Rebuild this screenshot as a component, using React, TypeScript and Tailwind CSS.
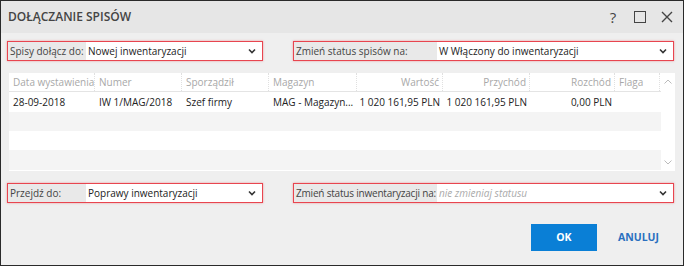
import React from "react";

const Chevron = () => (
  <svg width="8" height="6" viewBox="0 0 8 6" className="shrink-0">
    <polyline points="1,1.5 4,4.5 7,1.5" fill="none" stroke="#333" strokeWidth="1.6" />
  </svg>
);

function SelectBox({
  label,
  value,
  width,
  labelWidth,
  placeholder,
  tight,
}: {
  label: string;
  value: string;
  width: string;
  labelWidth: string;
  placeholder?: boolean;
  tight?: boolean;
}) {
  return (
    <div
      className={`${width} h-[20px] flex border border-[#e8454f] shadow-[0_0_2px_rgba(232,69,79,0.5)]`}
    >
      <div
        className={`${labelWidth} shrink-0 bg-[#e9e9e9] pl-[2px] flex items-center text-[#444] whitespace-nowrap overflow-hidden ${tight ? "tracking-[-0.2px]" : ""}`}
      >
        {label}
      </div>
      <div className="flex-1 bg-white flex items-center pl-[2px] pr-[6px]">
        <span className={`flex-1 whitespace-nowrap ${placeholder ? "italic text-[#aaa]" : "text-[#222]"}`}>{value}</span>
        <Chevron />
      </div>
    </div>
  );
}

const cols = [
  { h: "Data wystawienia", right: false },
  { h: "Numer", right: false },
  { h: "Sporządził", right: false },
  { h: "Magazyn", right: false },
  { h: "Wartość", right: true },
  { h: "Przychód", right: true },
  { h: "Rozchód", right: true },
  { h: "Flaga", right: false },
];

const data = [
  "28-09-2018",
  "IW 1/MAG/2018",
  "Szef firmy",
  "MAG - Magazyn...",
  "1 020 161,95 PLN",
  "1 020 161,95 PLN",
  "0,00 PLN",
  "",
];

const gridCls = "grid grid-cols-[86px_87px_87px_88px_86px_87px_85px_45px]";

export default function App() {
  return (
    <div
      className="w-[684px] h-[266px] border border-[#2a2a2a] bg-[#efefef] flex flex-col text-[10px] leading-none"
      style={{ fontFamily: '"Open Sans", "Noto Sans", sans-serif' }}
    >
      <div className="h-[32px] shrink-0 bg-[#e6e6e6] flex items-center pl-[7px] pr-[10px]">
        <div className="flex-1 font-semibold text-[12px] text-[#444]">DOŁĄCZANIE SPISÓW</div>
        <div className="flex items-center gap-[15px] text-[#444]">
          <span className="text-[15px] font-normal w-[12px] text-center">?</span>
          <span className="w-[12px] h-[12px] border-[1.5px] border-[#444]" />
          <svg width="12" height="12" viewBox="0 0 12 12">
            <path d="M1 1 L11 11 M11 1 L1 11" stroke="#444" strokeWidth="1.4" />
          </svg>
        </div>
      </div>

      <div className="flex-1 flex flex-col pl-[6px] pr-[9px] pt-[8px]">
        <div className="flex justify-between">
          <SelectBox label="Spisy dołącz do:" value="Nowej inwentaryzacji" width="w-[256px]" labelWidth="w-[78px]" />
          <SelectBox label="Zmień status spisów na:" value="W Włączony do inwentaryzacji" width="w-[381px]" labelWidth="w-[143px]" />
        </div>

        <div className="mt-[12px] ml-[2px] mr-[-1px] h-[98px] bg-white flex">
          <div className="flex-1 flex flex-col">
            <div className={`${gridCls} h-[19px] border-b border-[#e4e4e4] text-[#a8a8a8]`}>
              {cols.map((c, i) => (
                <div
                  key={i}
                  className={`flex items-center pl-[4px] pr-[3px] whitespace-nowrap border-r border-dotted border-[#e0e0e0] ${c.right ? "justify-end" : ""}`}
                >
                  {c.h}
                </div>
              ))}
            </div>
            <div className={`${gridCls} h-[20px] bg-white text-[#222]`}>
              {data.map((d, i) => (
                <div key={i} className={`flex items-center pl-[4px] pr-[3px] whitespace-nowrap ${cols[i].right ? "justify-end" : ""}`}>
                  {d}
                </div>
              ))}
            </div>
            <div className="h-[19px] bg-[#f4f4f4]" />
            <div className="h-[19px] bg-white" />
            <div className="h-[20px] bg-[#f4f4f4]" />
          </div>
          <div className="w-[14px] flex flex-col justify-between items-center py-[6px]">
            <svg width="8" height="5" viewBox="0 0 8 5">
              <polyline points="0.5,4.5 4,1 7.5,4.5" fill="none" stroke="#bbb" strokeWidth="1" />
            </svg>
            <svg width="8" height="5" viewBox="0 0 8 5">
              <polyline points="0.5,0.5 4,4 7.5,0.5" fill="none" stroke="#bbb" strokeWidth="1" />
            </svg>
          </div>
        </div>

        <div className="flex justify-between mt-[12px]">
          <SelectBox label="Przejdź do:" value="Poprawy inwentaryzacji" width="w-[256px]" labelWidth="w-[78px]" />
          <SelectBox
            label="Zmień status inwentaryzacji na:"
            value="nie zmieniaj statusu"
            width="w-[381px]"
            labelWidth="w-[143px]"
            placeholder
            tight
          />
        </div>

        <div className="flex justify-end items-center mt-[21px] pr-[15px]">
          <div className="w-[66px] h-[27px] bg-[#0a7fd6] text-white font-bold text-[10.5px] flex items-center justify-center">OK</div>
          <div className="ml-[21px] text-[#2a6fbf] font-bold text-[10.5px]">ANULUJ</div>
        </div>
      </div>
    </div>
  );
}
